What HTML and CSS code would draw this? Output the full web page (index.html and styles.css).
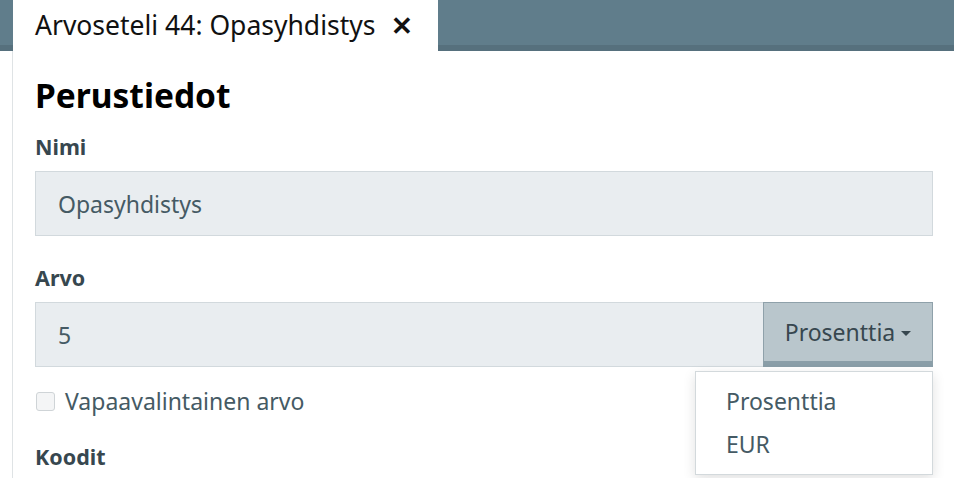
FILE: index.html
```html
<!DOCTYPE html>
<html lang="fi">
<head>
  <meta charset="UTF-8" />
  <title>Arvoseteli 44</title>
  <link rel="stylesheet" href="styles.css">
</head>
<body>
  <!-- Tabs -->
  <div class="topbar">
    <div class="tab">
      <span>Arvoseteli 44: Opasyhdistys</span>
      <span class="tab-close">&#x2715;</span>
    </div>
  </div>

  <div class="panel">
    <h1>Perustiedot</h1>

    <label class="field-label">Nimi</label>
    <div class="input">Opasyhdistys</div>

    <label class="field-label">Arvo</label>
    <div class="input-group">
      <div class="input grow">5</div>
      <div class="dropdown">
        <div class="dropdown-btn">Prosenttia <span class="caret"></span></div>
        <ul class="dropdown-menu">
          <li>Prosenttia</li>
          <li>EUR</li>
        </ul>
      </div>
    </div>

    <div class="check">
      <span class="checkbox"></span>
      <span>Vapaavalintainen arvo</span>
    </div>

    <label class="field-label koodit">Koodit</label>
  </div>
</body>
</html>
```

FILE: styles.css
```css
body {
  margin: 0;
  font-family: "Noto Sans", "Open Sans", sans-serif;
  background: #ffffff;
  color: #37474f;
  overflow: hidden;
}

.topbar {
  height: 45px;
  background: #607d8b;
  border-bottom: 6px solid #56707d;
  padding-left: 13px;
}

.tab {
  width: 403px;
  height: 51px;
  background: #ffffff;
  color: #111;
  font-size: 26.5px;
  padding-left: 22px;
  display: flex;
  align-items: center;
  gap: 16px;
  box-sizing: content-box;
}

.tab span:first-child {
  margin-top: -2px;
}

.tab-close {
  font-weight: bold;
  font-size: 26px;
  margin-top: -2px;
}

.panel {
  margin-left: 12px;
  border-left: 1px solid #dfe3e5;
  padding: 22px 21px 0 22px;
  height: calc(100vh - 51px);
  box-sizing: border-box;
}

h1 {
  margin: 0 0 16px;
  font-size: 33.5px;
  font-weight: bold;
  color: #000;
  line-height: 44px;
}

.field-label {
  display: block;
  font-size: 21.5px;
  font-weight: bold;
  color: #37474f;
  line-height: 28px;
  margin-bottom: 10px;
}

.koodit {
  margin-bottom: 0;
}

.input {
  height: 63px;
  background: #e9edf0;
  border: 1px solid #d2d9dd;
  padding: 0 22px;
  font-size: 23px;
  color: #455a64;
  display: flex;
  align-items: center;
  margin-bottom: 28px;
}

.input-group {
  display: flex;
  margin-bottom: 18px;
}

.input-group .input {
  margin-bottom: 0;
}

.grow {
  flex: 1;
  border-right: none;
}

.dropdown {
  position: relative;
  width: 170px;
}

.dropdown-btn {
  height: 58px;
  background: #b9c6cc;
  border: 1px solid #8fa1aa;
  border-bottom: 6px solid #8a9ea8;
  font-size: 23px;
  color: #37474f;
  display: flex;
  align-items: center;
  justify-content: center;
  gap: 6px;
}

.caret {
  width: 0;
  height: 0;
  border-left: 5px solid transparent;
  border-right: 5px solid transparent;
  border-top: 5px solid #37474f;
  margin-top: 2px;
}

.dropdown-menu {
  position: absolute;
  top: 69px;
  right: 0;
  width: 236px;
  margin: 0;
  padding: 8px 0;
  list-style: none;
  background: #ffffff;
  border: 1px solid #d3d9dc;
  box-shadow: 0 4px 12px rgba(0, 0, 0, 0.12);
}

.dropdown-menu li {
  font-size: 23px;
  color: #455a64;
  padding: 0 30px;
  line-height: 43px;
}

.check {
  display: flex;
  align-items: center;
  gap: 10px;
  font-size: 23px;
  color: #455a64;
  margin-bottom: 26px;
}

.checkbox {
  width: 17px;
  height: 17px;
  border: 1px solid #cfd4d7;
  border-radius: 3px;
  background: #f4f5f6;
  margin-left: 1px;
}
```
